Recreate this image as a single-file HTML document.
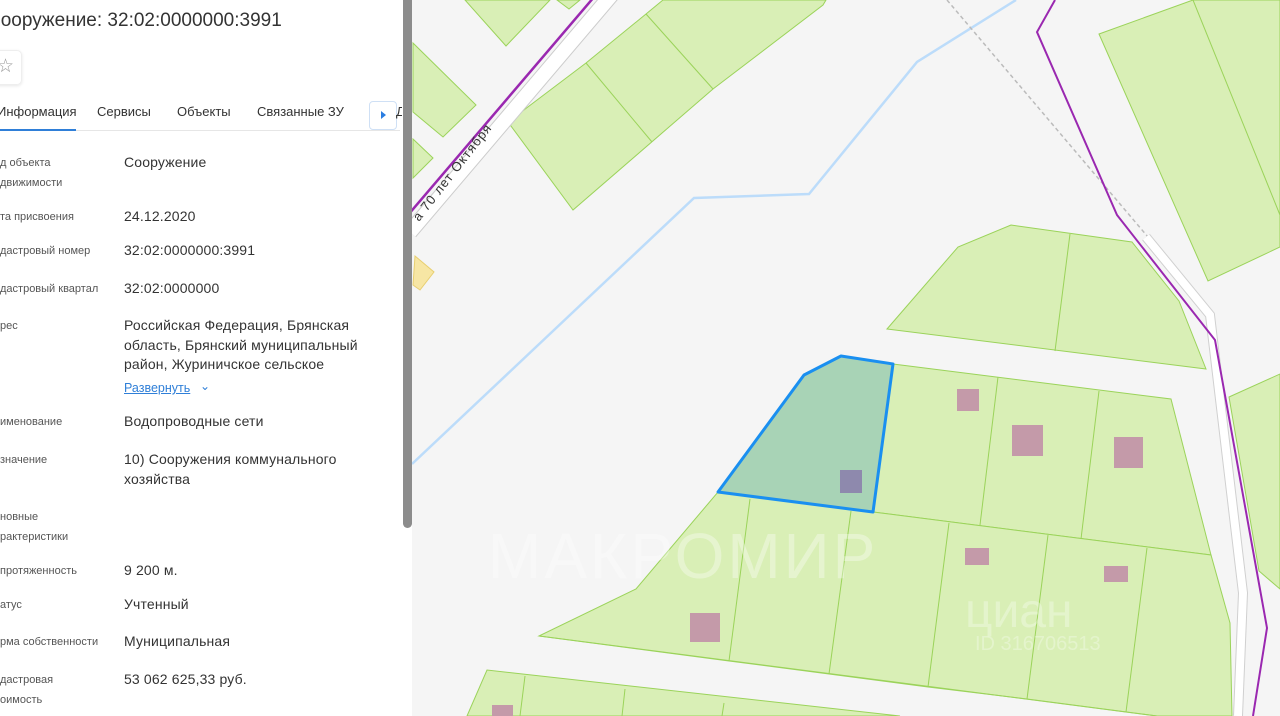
<!DOCTYPE html>
<html><head><meta charset="utf-8"><style>
html,body{margin:0;padding:0;width:1280px;height:716px;overflow:hidden;background:#fff;font-family:"Liberation Sans",sans-serif}
#map{position:absolute;left:412px;top:0}
#panel{position:absolute;left:0;top:0;width:403px;height:716px;background:#fff;overflow:hidden}
#sb{position:absolute;left:403px;top:0;width:9px;height:528px;background:#8c8c8c;border-radius:0 0 5px 5px}
.t{position:absolute;white-space:nowrap}
.l{position:absolute;left:0;font-size:11px;color:#555;white-space:nowrap;line-height:20px}
.v{position:absolute;left:124px;font-size:14px;color:#333;line-height:19.5px;letter-spacing:.15px}
</style></head><body>
<svg id="map" width="868" height="716" viewBox="412 0 868 716" xmlns="http://www.w3.org/2000/svg">
<rect x="412" y="0" width="868" height="716" fill="#f5f5f5"/>
<g fill="#d9efb6" stroke="#9bd35a" stroke-width="1">
<polygon points="465,0 550,0 506,46"/>
<polygon points="557,0 580,0 569,9"/>
<polygon points="413,43 476,105 443,137 413,112"/>
<polygon points="413,139 433,158 413,178"/>
<polygon points="508,122 586,63 646,14 663,0 826,0 823,5 713,89 573,210"/>
<polygon points="1099,34 1193,0 1280,0 1280,247 1208,281"/>
<polygon points="887,329 958,247 1011,225 1132,242 1179,301 1206,369"/>
<polygon points="1229,397 1280,374 1280,589 1259,571"/>
<polygon points="893,364 1171,399 1211,555 873,512"/>
<polygon points="539,636 636,589 718,492 873,512 1211,555 1230,623 1232,716 1157,716"/>
<polygon points="467,716 487,670 900,716"/>
</g>
<g stroke="#9bd35a" stroke-width="1" fill="none">
<line x1="586" y1="63" x2="652" y2="142"/><line x1="646" y1="14" x2="713" y2="89"/>
<line x1="1193" y1="0" x2="1280" y2="215"/><line x1="1070" y1="234" x2="1055" y2="351"/>
<line x1="998" y1="377" x2="980" y2="525"/><line x1="1099" y1="391" x2="1081" y2="539"/>
<line x1="750" y1="499" x2="729" y2="661"/><line x1="851" y1="511" x2="829" y2="674"/>
<line x1="949" y1="523" x2="928" y2="687"/><line x1="1048" y1="535" x2="1027" y2="699"/>
<line x1="1147" y1="548" x2="1126" y2="712"/>
<polyline points="539,636 729,661 829,674 928,687 1027,699 1157,716"/>
<line x1="525" y1="676" x2="520" y2="716"/><line x1="625" y1="689" x2="622" y2="716"/><line x1="724" y1="703" x2="722" y2="716"/>
</g>
<polygon points="415,256 434,272 420,290 413,285" fill="#f7e6a4" stroke="#e8cf70"/>
<polyline points="1016,0 917,62 809,194 694,198 412,464" fill="none" stroke="#bcdcfa" stroke-width="2.5"/>
<polyline points="947,0 1148,237" fill="none" stroke="#bbb" stroke-width="1.5" stroke-dasharray="4,3"/>
<polyline points="1146,237 1210,315 1243,593 1238,716" fill="none" stroke="#d0d0d0" stroke-width="10"/>
<polyline points="1146,237 1210,315 1243,593 1238,716" fill="none" stroke="#fff" stroke-width="8"/>
<polyline points="1055,0 1037,32 1117,215 1215,340 1267,628 1253,716" fill="none" stroke="#9a28b0" stroke-width="2"/>
<line x1="614" y1="-8" x2="410" y2="232" stroke="#ccc" stroke-width="16"/>
<line x1="614" y1="-8" x2="410" y2="232" stroke="#fff" stroke-width="14"/>
<line x1="600" y1="-10" x2="408" y2="215" stroke="#9a28b0" stroke-width="2.5"/>
<text x="0" y="0" font-size="13" fill="#333" font-family="Liberation Sans" transform="translate(419,222) rotate(-52)" letter-spacing="1">а 70 лет Октября</text>
<g fill="#c49aa9">
<rect x="957" y="389" width="22" height="22"/><rect x="1012" y="425" width="31" height="31"/>
<rect x="1114" y="437" width="29" height="31"/><rect x="965" y="548" width="24" height="17"/>
<rect x="1104" y="566" width="24" height="16"/><rect x="690" y="613" width="30" height="29"/>
<rect x="492" y="705" width="21" height="11"/>
</g>
<polygon points="718,492 804,375 841,356 893,364 873,512" fill="#a8d3b6" stroke="#1a8ff0" stroke-width="3" stroke-linejoin="round"/>
<rect x="840" y="470" width="22" height="23" fill="#8e89ad"/>
<text x="488" y="578" font-size="64" fill="#fff" fill-opacity="0.35" font-family="Liberation Sans" letter-spacing="3">МАКРОМИР</text>
<text x="965" y="627" font-size="48" fill="#fff" fill-opacity="0.3" font-family="Liberation Sans">циан</text>
<text x="975" y="650" font-size="20" fill="#fff" fill-opacity="0.3" font-family="Liberation Sans">ID 316706513</text>
</svg>
<div id="panel">
<div class="t" style="left:-13px;top:10px;font-size:19px;color:#333">Сооружение: 32:02:0000000:3991</div>
<div style="position:absolute;left:-10px;top:50px;width:30px;height:33px;border:1px solid #eee;border-radius:5px;box-shadow:0 1px 3px rgba(0,0,0,.1)"></div>
<div class="t" style="left:-3px;top:55px;font-size:19px;color:#999">☆</div>
<div class="t" style="left:-3px;top:104px;font-size:13px;color:#333">Информация</div>
<div class="t" style="left:97px;top:104px;font-size:13px;color:#333">Сервисы</div>
<div class="t" style="left:177px;top:104px;font-size:13px;color:#333">Объекты</div>
<div class="t" style="left:257px;top:104px;font-size:13px;color:#333">Связанные ЗУ</div>
<div style="position:absolute;left:0;top:130px;width:400px;height:1px;background:#e6e6e6"></div>
<div style="position:absolute;left:0;top:129px;width:76px;height:2px;background:#2f7fd8"></div>
<div style="position:absolute;left:369px;top:101px;width:26px;height:27px;border:1px solid #cfe0f5;border-radius:4px;background:#fff"></div>
<div style="position:absolute;left:381px;top:111px;width:0;height:0;border-left:5px solid #2a7de1;border-top:4px solid transparent;border-bottom:4px solid transparent"></div>
<div class="l" style="top:153px">д объекта<br>движимости</div><div class="v" style="top:153px">Сооружение</div>
<div class="l" style="top:207px">та присвоения</div><div class="v" style="top:207px">24.12.2020</div>
<div class="l" style="top:241px">дастровый номер</div><div class="v" style="top:241px">32:02:0000000:3991</div>
<div class="l" style="top:279px">дастровый квартал</div><div class="v" style="top:279px">32:02:0000000</div>
<div class="l" style="top:316px">рес</div><div class="v" style="top:316px">Российская Федерация, Брянская<br>область, Брянский муниципальный<br>район, Журиничское сельское</div>
<div class="t" style="left:124px;top:381px;font-size:12.5px;color:#2f7fd8;text-decoration:underline">Развернуть</div>
<div class="t" style="left:200px;top:379px;font-size:12px;color:#2f7fd8">⌄</div>
<div class="l" style="top:412px">именование</div><div class="v" style="top:412px">Водопроводные сети</div>
<div class="l" style="top:450px">значение</div><div class="v" style="top:450px">10) Сооружения коммунального<br>хозяйства</div>
<div class="l" style="top:507px">новные<br>рактеристики</div>
<div class="l" style="top:561px">протяженность</div><div class="v" style="top:561px">9 200 м.</div>
<div class="l" style="top:595px">атус</div><div class="v" style="top:595px">Учтенный</div>
<div class="l" style="top:632px">рма собственности</div><div class="v" style="top:632px">Муниципальная</div>
<div class="l" style="top:670px">дастровая<br>оимость</div><div class="v" style="top:670px">53 062 625,33 руб.</div>
</div>
<div class="t" style="left:396px;top:104px;font-size:13px;color:#333;width:6px;overflow:hidden">Д</div>
<div id="sb"></div>
</body></html>
